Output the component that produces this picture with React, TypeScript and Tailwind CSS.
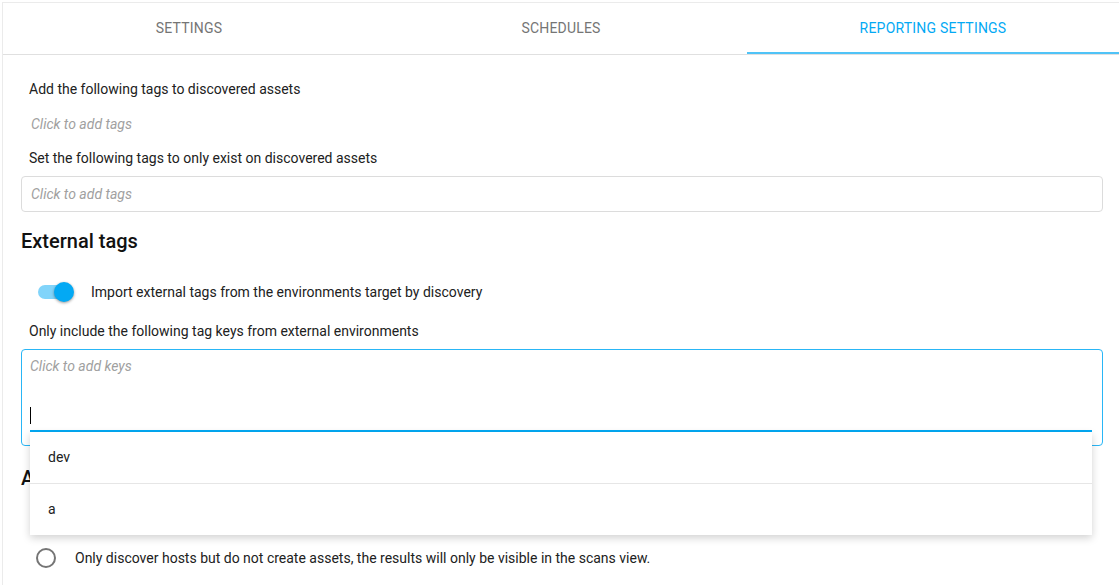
import React from "react";

export default function App() {
  const font = { fontFamily: "Roboto, 'Liberation Sans', sans-serif" };
  return (
    <div style={font} className="min-h-[585px] bg-white pl-[2px] pt-[2px]">
      <div className="h-[583px] border-l border-t border-[#ebebeb] overflow-hidden">
        {/* Tabs */}
        <div className="flex border-b border-[#e0e0e0]">
          <div className="flex h-[51px] flex-1 items-center justify-center text-[14px] tracking-[0.2px] text-[#757575]">
            SETTINGS
          </div>
          <div className="flex h-[51px] flex-1 items-center justify-center text-[14px] tracking-[0.2px] text-[#757575]">
            SCHEDULES
          </div>
          <div className="flex h-[51px] flex-1 items-center justify-center border-b-2 border-[#4fc3f7] pt-[2px] text-[14px] tracking-[0.2px] text-[#03a9f4]">
            REPORTING SETTINGS
          </div>
        </div>

        {/* Content */}
        <div className="pl-[18px] pr-[16px]">
          <div className="mt-[24px] h-[20px] pl-[8px] text-[14px] leading-[20px] text-[#212121]">
            Add the following tags to discovered assets
          </div>
          <div className="mt-[7px] flex h-[36px] items-center pl-[10px] text-[14px] italic text-[#a0a0a0]">
            Click to add tags
          </div>
          <div className="mt-[6px] h-[20px] pl-[8px] text-[14px] leading-[20px] text-[#212121]">
            Set the following tags to only exist on discovered assets
          </div>
          <div className="mt-[8px] flex h-[36px] items-center rounded-[4px] border border-[#dcdcdc] pl-[9px] text-[14px] italic text-[#a0a0a0]">
            Click to add tags
          </div>

          <div className="mt-[15px] h-[28px] text-[20px] font-medium leading-[28px] text-[#111]">
            External tags
          </div>

          <div className="mt-[17px] flex h-[40px] items-center">
            <div className="relative ml-[16px] h-[40px] w-[40px]">
              <div className="absolute left-[1px] top-[13px] h-[14px] w-[34px] rounded-full bg-[#81d4fa]" />
              <div className="absolute left-[17px] top-[10px] h-[20px] w-[20px] rounded-full bg-[#03a9f4] shadow-[0_1px_3px_rgba(0,0,0,0.4)]" />
            </div>
            <div className="ml-[14px] text-[14px] text-[#212121]">
              Import external tags from the environments target by discovery
            </div>
          </div>

          <div className="mt-[9px] h-[20px] pl-[8px] text-[14px] leading-[20px] text-[#212121]">
            Only include the following tag keys from external environments
          </div>

          <div className="relative z-10 mt-[8px] h-[97px] rounded-[4px] border border-[#29b6f6] pl-[8px] pr-[10px]">
            <div className="pt-[6px] text-[14px] italic leading-[20px] text-[#a0a0a0]">
              Click to add keys
            </div>
            <div className="relative mt-[30px] h-[26px] border-b-2 border-[#03a9f4]">
              <div className="absolute left-0 top-[1px] h-[17px] w-px bg-black" />
              <div className="absolute left-0 right-0 top-[calc(100%+2px)] bg-white shadow-[0_3px_8px_rgba(0,0,0,0.18)]">
                <div className="flex h-[51px] items-center pl-[18px] text-[14px] text-[#212121]">
                  dev
                </div>
                <div className="h-px bg-[#e6e6e6]" />
                <div className="flex h-[51px] items-center pl-[18px] text-[14px] text-[#212121]">
                  a
                </div>
              </div>
            </div>
          </div>

          <div className="mt-[18px] h-[28px] text-[20px] font-medium leading-[28px] text-[#111]">
            Asset creation
          </div>

          <div className="mt-[9px] flex h-[38px] items-center">
            <div className="ml-[15px] h-[20px] w-[20px] rounded-full border-2 border-[#757575]" />
            <div className="ml-[19px] text-[14px] text-[#212121]">
              Create assets for discovered hosts and keep them up to date.
            </div>
          </div>
          <div className="flex h-[38px] items-center">
            <div className="ml-[15px] h-[20px] w-[20px] rounded-full border-2 border-[#757575]" />
            <div className="ml-[19px] text-[14px] text-[#212121]">
              Only discover hosts but do not create assets, the results will only be visible in the scans view.
            </div>
          </div>
        </div>
      </div>
    </div>
  );
}
